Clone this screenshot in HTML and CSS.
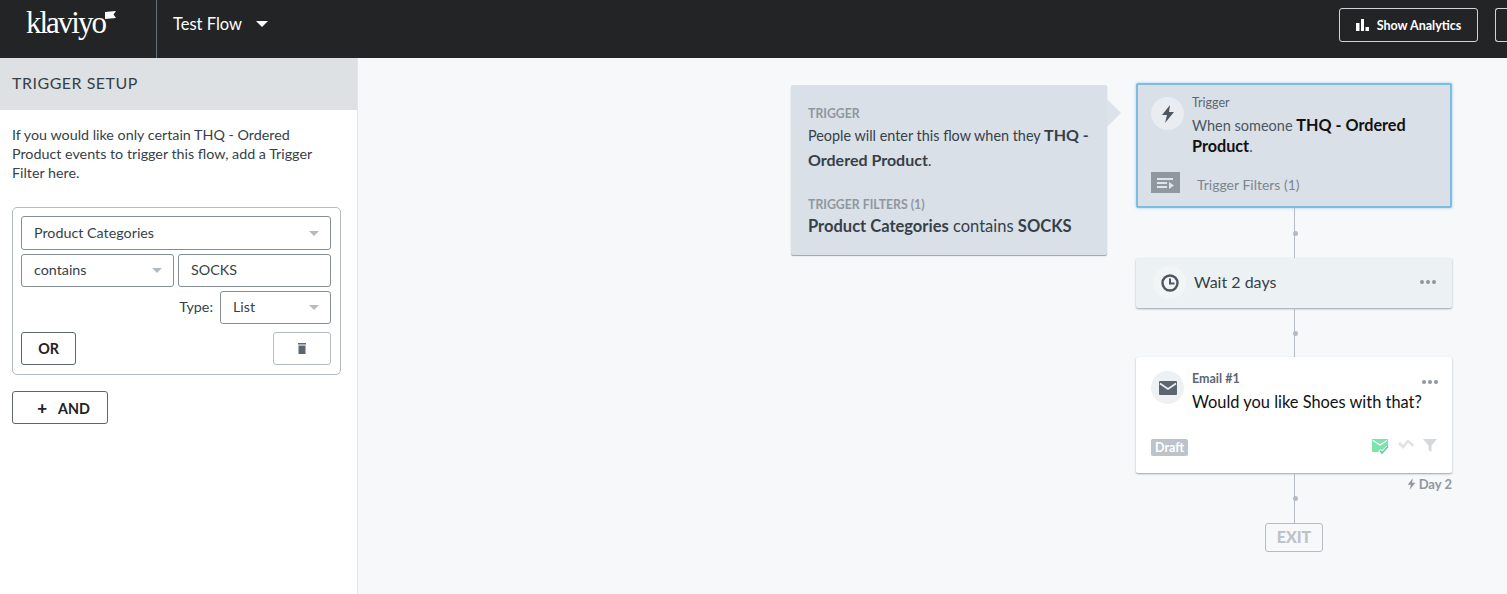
FILE: index.html
```html
<!doctype html>
<html lang="en">
	<head>
		<meta charset="UTF-8" />
		<title>Test Flow</title>
		<link rel="stylesheet" href="styles.css">
	</head>
	<body>
		<header class="topbar">
			<div class="logo">
				<span class="logo-text">klaviyo</span>
				<svg class="logo-flag" width="11" height="9" viewBox="0 0 11 9"><path d="M0 1L11 0L8.500 3.500L11 7L0 8Z" fill="#fff"/></svg>
			</div>
			<div class="flow-name">
				<span>Test Flow</span>
				<span class="caret caret-white"></span>
			</div>
			<div class="topbar-actions">
				<button class="btn-dark">
					<svg width="13" height="12" viewBox="0 0 13 12"><path d="M0 4h3.500v8H0zM5 0h3v12H5zM9.500 8H13v4H9.500z" fill="#fff"/></svg>
					Show Analytics
				</button>
				<button class="btn-dark btn-cut"></button>
			</div>
		</header>

		<div class="main">
			<aside class="sidebar">
				<h2 class="sidebar-title">TRIGGER SETUP</h2>
				<p class="sidebar-help">If you would like only certain THQ - Ordered Product events to trigger this flow, add a Trigger Filter here.</p>

				<div class="filter-box">
					<div class="select">Product Categories<span class="caret"></span></div>
					<div class="filter-row">
						<div class="select">contains<span class="caret"></span></div>
						<div class="select">SOCKS</div>
					</div>
					<div class="filter-row type-row">
						<label>Type:</label>
						<div class="select select-type">List<span class="caret"></span></div>
					</div>
					<div class="filter-actions">
						<button class="btn btn-or">OR</button>
						<button class="btn btn-trash">
							<svg width="8" height="11" viewBox="0 0 8 11"><path d="M0 0h8v1.500H0zM0.500 2.500h7V11h-7z" fill="#5c6670"/></svg>
						</button>
					</div>
				</div>

				<button class="btn btn-and"><span class="plus">+</span>AND</button>
			</aside>

			<section class="canvas">
				<div class="popover">
					<h4>TRIGGER</h4>
					<p class="popover-text">People will enter this flow when they <b>THQ -</b> <b>Ordered Product</b>.</p>
					<h4 class="filters-head">TRIGGER FILTERS (1)</h4>
					<p class="popover-filter"><b>Product Categories</b> contains <b>SOCKS</b></p>
				</div>

				<div class="node node-trigger">
					<div class="icon-circle">
						<svg width="14" height="18" viewBox="0 0 14 18"><path d="M9 0L1 10h5l-2 8 9-11H8z" fill="#4d5661"/></svg>
					</div>
					<div class="node-label">Trigger</div>
					<div class="node-title">When someone <b>THQ - Ordered</b> <b>Product</b>.</div>
					<div class="trigger-foot">
						<svg width="29" height="21" viewBox="0 0 29 21"><rect width="29" height="21" fill="#8f979f"/><path d="M6 6h16v2H6zM6 10h10v2H6zM6 14h10v2H6zM18 10l5 3.500-5 3.500z" fill="#dfe4e9"/></svg>
						<span>Trigger Filters (1)</span>
					</div>
				</div>

				<div class="line line-one"><i></i></div>

				<div class="node node-wait">
					<div class="icon-circle">
						<svg width="18" height="18" viewBox="0 0 18 18"><circle cx="9" cy="9" r="7.500" fill="none" stroke="#4d5661" stroke-width="2.400"/><path d="M9 4.500V9.500H13.500" fill="none" stroke="#4d5661" stroke-width="2"/></svg>
					</div>
					<span class="wait-text">Wait 2 days</span>
					<span class="dots"><i></i><i></i><i></i></span>
				</div>

				<div class="line line-two"><i></i></div>

				<div class="node node-email">
					<div class="icon-circle">
						<svg width="18" height="14" viewBox="0 0 18 14"><rect width="18" height="14" rx="1" fill="#5c6670"/><path d="M1 2.500L9 8l8-5.500" fill="none" stroke="#eef1f3" stroke-width="1.600"/></svg>
					</div>
					<div class="node-label">Email #1</div>
					<div class="node-title">Would you like Shoes with that?</div>
					<span class="dots"><i></i><i></i><i></i></span>
					<span class="draft">Draft</span>
					<div class="email-icons">
						<svg width="18" height="16" viewBox="0 0 18 16"><path d="M0 0h16v11H9.500L8 13H0z" fill="#7be3ac"/><path d="M1 1.500l7 4.500 7-4.500" fill="none" stroke="#fff" stroke-width="1.300"/><path d="M7.500 11l2.500 3 6-6" fill="none" stroke="#fff" stroke-width="3.500"/><path d="M8 11.500l2 2.500 6-6.500" fill="none" stroke="#57cf8f" stroke-width="1.500"/></svg>
						<svg width="17" height="10" viewBox="0 0 17 10"><path d="M1 4l4 4 5-6 5.500 5" fill="none" stroke="#dfe2e5" stroke-width="2.600"/></svg>
						<svg width="14" height="13" viewBox="0 0 14 13"><path d="M0 0h14L8.500 6.500V13l-3-2V6.500z" fill="#d5d9dd"/></svg>
					</div>
				</div>

				<div class="day-tag">
					<svg width="9" height="12" viewBox="0 0 14 18"><path d="M9 0L1 10h5l-2 8 9-11H8z" fill="#8f979f"/></svg>
					Day 2
				</div>

				<div class="line line-three"><i></i></div>

				<div class="exit">EXIT</div>
			</section>
		</div>
	</body>
</html>
```

FILE: styles.css
```css
* {
	box-sizing: border-box;
}
html,
body {
	height: 100%;
}
body {
	margin: 0;
	font-family: Lato, Arial, sans-serif;
	color: #373f47;
	background: #f6f8fa;
	overflow: hidden;
	display: flex;
	flex-direction: column;
}
.topbar {
	height: 58px;
	flex: none;
	display: flex;
	align-items: center;
	background: #232426;
	color: #fff;
}
.logo {
	width: 157px;
	height: 58px;
	flex: none;
	padding: 5px 0 0 26px;
	border-right: 1px solid #66707a;
	display: flex;
	align-items: flex-start;
}
.logo-text {
	font-family: "Liberation Serif", serif;
	font-size: 31px;
	line-height: 36px;
	letter-spacing: -2px;
}
.logo-flag {
	margin-top: 6px;
}
.flow-name {
	display: flex;
	align-items: center;
	gap: 14px;
	padding-left: 16px;
	font-family: Lato, sans-serif;
	font-size: 16.500px;
	margin-top: -10px;
}
.caret {
	width: 0;
	height: 0;
	border-left: 5px solid transparent;
	border-right: 5px solid transparent;
	border-top: 5px solid #b4bbc1;
}
.caret-white {
	border-left-width: 6px;
	border-right-width: 6px;
	border-top: 6px solid #fff;
}
.topbar-actions {
	margin-left: auto;
	display: flex;
	gap: 17px;
	margin-top: -8px;
}
.btn-dark {
	width: 139px;
	height: 34px;
	background: transparent;
	border: 1px solid #d0d4d8;
	border-radius: 3px;
	color: #fff;
	font-family: Lato, sans-serif;
	font-size: 12.500px;
	font-weight: 700;
	display: flex;
	align-items: center;
	justify-content: center;
	gap: 8px;
	padding: 0;
}
.btn-cut {
	width: 12px;
	border-right: none;
	border-radius: 3px 0 0 3px;
}
.main {
	flex: 1;
	display: flex;
	min-height: 0;
}
.sidebar {
	width: 358px;
	flex: none;
	background: #fff;
	border-right: 1px solid #e3e6e9;
}
.sidebar-title {
	margin: 0;
	height: 52px;
	padding-left: 12px;
	background: #dee1e4;
	font-size: 16px;
	font-weight: 400;
	line-height: 50px;
	letter-spacing: 0.5px;
	color: #373f47;
}
.sidebar-help {
	margin: 15px 0 0;
	padding: 0 12px;
	width: 332px;
	font-size: 14.300px;
	line-height: 19px;
}
.filter-box {
	margin: 25px 16px 0 12px;
	width: 329px;
	height: 168px;
	padding: 8px 9px 8px 8px;
	border: 1px solid #b4bbc1;
	border-radius: 5px;
	display: flex;
	flex-direction: column;
	gap: 4px;
}
.select {
	height: 34px;
	padding: 0 13px 2px 12px;
	border: 1px solid #868e96;
	border-radius: 3px;
	display: flex;
	align-items: center;
	justify-content: space-between;
	font-size: 14.300px;
	color: #373f47;
}
.select .caret {
	margin: 2px -2px 0 0;
}
.filter-row {
	display: flex;
	gap: 4px;
}
.filter-row .select {
	flex: 1;
	height: 33px;
}
.type-row {
	justify-content: flex-end;
	align-items: center;
	gap: 7px;
}
.type-row label {
	font-size: 14.300px;
	margin-bottom: 2px;
}
.filter-row .select-type {
	flex: none;
	width: 111px;
}
.filter-actions {
	display: flex;
	justify-content: space-between;
	margin-top: 4px;
}
.btn {
	height: 33px;
	background: #fff;
	border: 1px solid #5c6670;
	border-radius: 3px;
	color: #222;
	font-family: Lato, sans-serif;
	font-size: 14.300px;
	font-weight: 700;
	padding: 0;
}
.btn-or {
	width: 55px;
}
.btn-trash {
	width: 58px;
	border-color: #b4bbc1;
	display: flex;
	align-items: center;
	justify-content: center;
}
.btn-and {
	display: block;
	width: 96px;
	margin: 16px 0 0 12px;
	padding-left: 7px;
}
.plus {
	margin-right: 11px;
	font-size: 17px;
	font-weight: 900;
}
.canvas {
	flex: 1;
	position: relative;
	background: #f6f8fa;
}
.popover {
	position: absolute;
	left: 433px;
	top: 27px;
	width: 316px;
	height: 170px;
	padding: 22px 17px 0;
	background: #d9e0e8;
	border-radius: 2px;
	box-shadow: 0 1px 1px #9aa3ad;
}
.popover::after {
	content: "";
	position: absolute;
	left: 100%;
	top: 14px;
	border-left: 14px solid #dde3ea;
	border-top: 14px solid transparent;
	border-bottom: 14px solid transparent;
}
.popover h4 {
	margin: 0;
	font-size: 12.300px;
	line-height: 14px;
	font-weight: 700;
	color: #8f979f;
}
.popover-text {
	margin: 2px 0 0;
	font-size: 14.400px;
	line-height: 24px;
}
.popover-text b {
	font-size: 16px;
}
.popover .filters-head {
	margin-top: 25px;
}
.popover-filter {
	margin: 4px 0 0;
	font-size: 16.500px;
	line-height: 21px;
}
.node {
	position: absolute;
	left: 778px;
	width: 316px;
	border-radius: 2px;
	box-shadow: 0 1px 2px #9aa3ad;
}
.icon-circle {
	position: absolute;
	left: 15px;
	top: 14px;
	width: 33px;
	height: 33px;
	border-radius: 50%;
	background: #eef1f3;
	display: flex;
	align-items: center;
	justify-content: center;
}
.node-label {
	position: absolute;
	left: 56px;
	top: 14px;
	font-size: 12.500px;
	line-height: 15px;
	font-weight: 700;
	color: #5c6670;
}
.node-title {
	position: absolute;
	left: 56px;
	top: 34px;
	width: 245px;
	font-size: 16.400px;
	line-height: 21px;
	color: #111;
}
.node-trigger {
	top: 25px;
	height: 125px;
	background: #d9e0e8;
	border: 2px solid #7fbde0;
	box-shadow: 0 0 3px #9ccbe6;
}
.node-trigger .icon-circle {
	left: 13px;
	top: 12px;
	background: #e9edf1;
}
.node-trigger .node-label {
	left: 54px;
	top: 10px;
	font-weight: 400;
}
.node-trigger .node-title {
	left: 54px;
	top: 30px;
	font-size: 14.500px;
	line-height: 20px;
	color: #4d5661;
}
.node-trigger .node-title b {
	font-size: 16.200px;
	color: #111;
}
.trigger-foot {
	position: absolute;
	left: 13px;
	top: 91px;
	display: flex;
	align-items: center;
	gap: 17px;
	font-size: 14px;
	color: #7d868f;
}
.trigger-foot svg {
	margin-top: -5px;
}
.node-wait {
	top: 200px;
	height: 50px;
	background: #ecf2f4;
}
.node-wait .icon-circle {
	left: 17px;
	top: 8px;
	background: #f1f5f6;
}
.wait-text {
	position: absolute;
	left: 58px;
	top: 13px;
	font-size: 16px;
	line-height: 21px;
}
.node-wait .dots {
	top: 22px;
}
.dots {
	position: absolute;
	right: 16px;
	top: 23px;
	display: flex;
	gap: 2px;
}
.dots i {
	width: 4px;
	height: 4px;
	border-radius: 50%;
	background: #8f979f;
}
.node-email {
	top: 299px;
	height: 116px;
	background: #fff;
}
.node-email .dots {
	right: 14px;
}
.draft {
	position: absolute;
	left: 15px;
	top: 82px;
	height: 17px;
	padding: 0 4px;
	border-radius: 2px;
	background: #bcc3ca;
	color: #fff;
	font-size: 12.500px;
	font-weight: 700;
	line-height: 17px;
}
.email-icons {
	position: absolute;
	right: 15px;
	top: 82px;
	display: flex;
	align-items: flex-start;
	gap: 8px;
}
.line {
	position: absolute;
	left: 936px;
	width: 1px;
	height: 50px;
	background: #b4bbc3;
}
.line i {
	position: absolute;
	left: -1px;
	top: 23px;
	width: 5px;
	height: 5px;
	border-radius: 50%;
	background: #b4bbc3;
}
.line-one {
	top: 150px;
}
.line-two {
	top: 250px;
	height: 49px;
}
.line-three {
	top: 415px;
}
.day-tag {
	position: absolute;
	left: 1000px;
	width: 94px;
	top: 418px;
	display: flex;
	align-items: center;
	justify-content: flex-end;
	gap: 3px;
	font-size: 13px;
	font-weight: 700;
	color: #8f979f;
}
.exit {
	position: absolute;
	left: 907px;
	top: 465px;
	width: 58px;
	height: 29px;
	border: 1px solid #b4bbc3;
	border-radius: 3px;
	text-align: center;
	font-size: 16px;
	font-weight: 900;
	line-height: 25px;
	color: #bcc3ca;
}
```
